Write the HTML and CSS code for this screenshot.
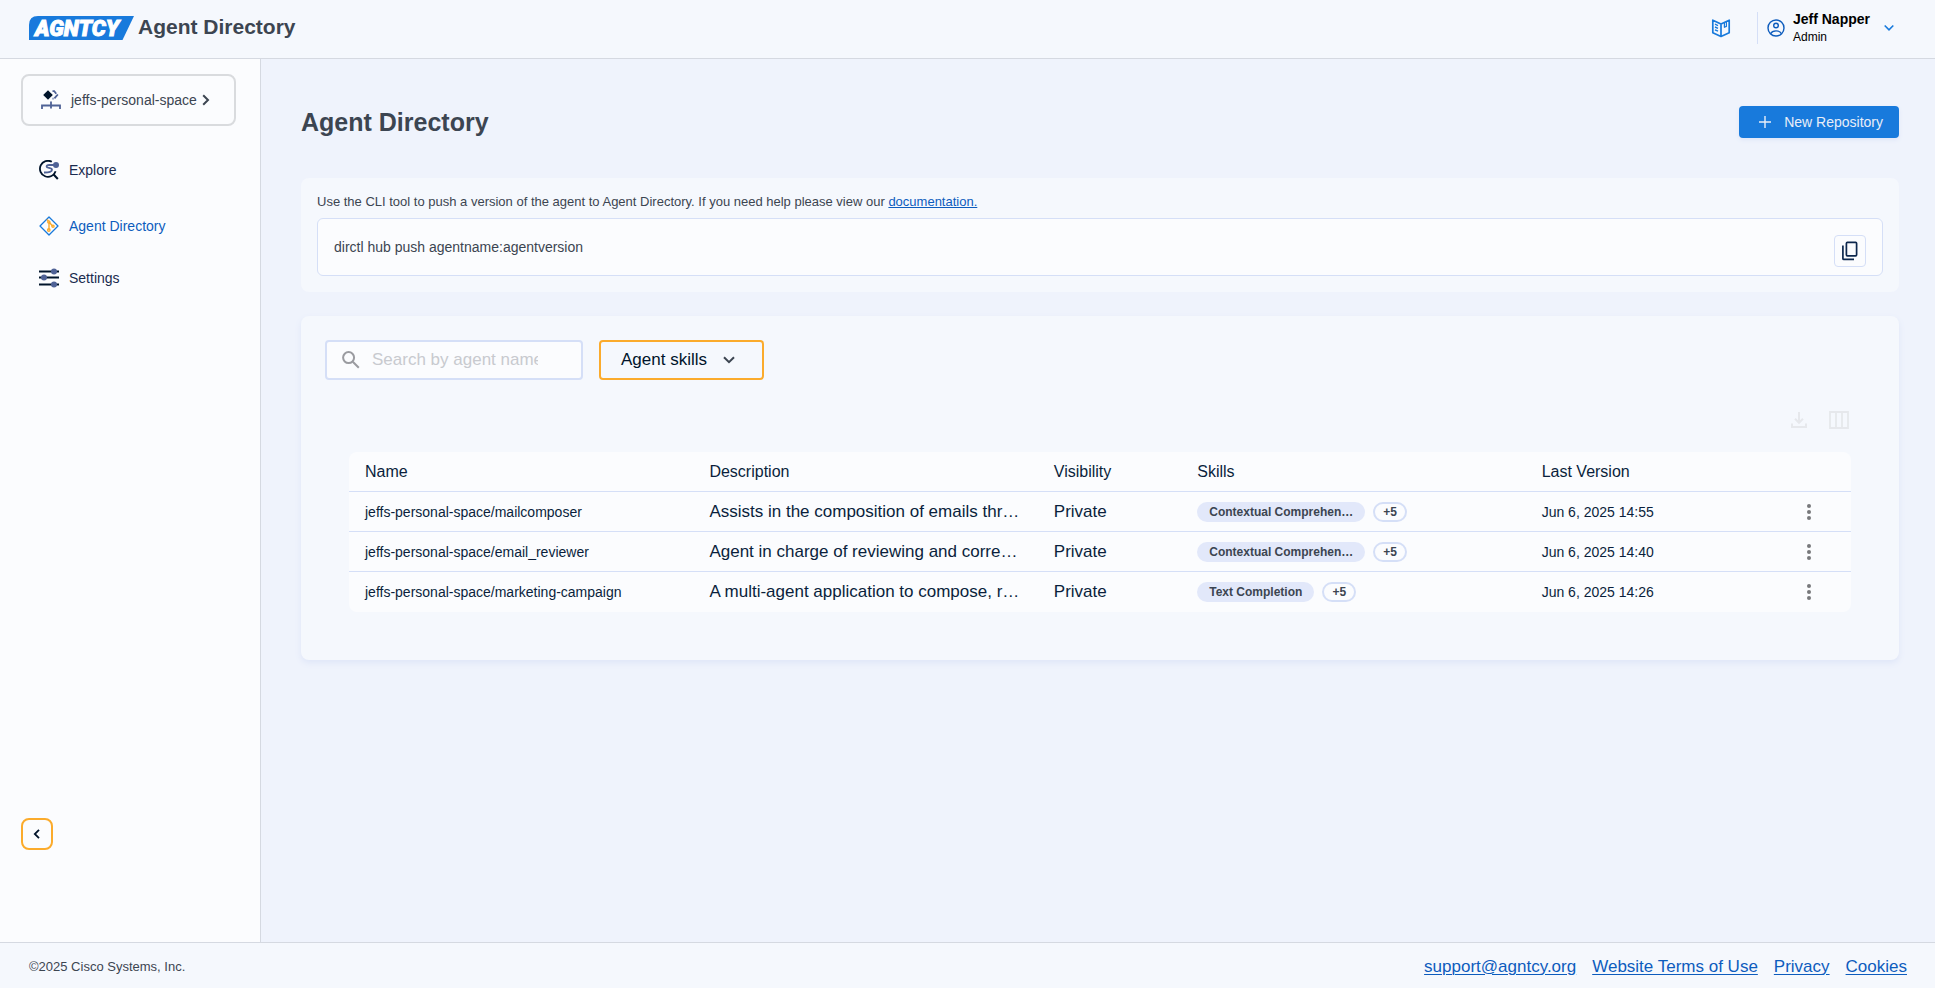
FILE: index.html
```html
<!DOCTYPE html>
<html lang="en">
<head>
<meta charset="utf-8">
<title>Agent Directory</title>
<link rel="stylesheet" href="styles.css">
</head>
<body>
<header class="topbar">
  <a class="brand" href="#">
    <svg class="brand-logo" width="105" height="24" viewBox="0 0 105 24" role="img" aria-label="AGNTCY">
      <path d="M9 0H105L93.500 24H0V9Q0 0 9 0Z" fill="#187adc"/>
      <text class="logo-text" x="6" y="20">AGNTCY</text>
    </svg>
    <span class="brand-name">Agent Directory</span>
  </a>
  <div class="topbar-right">
    <a class="docs-link" href="#" aria-label="Documentation">
      <svg width="20" height="20" viewBox="0 0 20 20" fill="none" stroke="#187adc" stroke-width="1.700" stroke-linejoin="round">
        <path d="M1.800 2.200 10 6 18.200 2.200V14.800L10 18.500 1.800 14.800ZM10 6V18.500"/>
        <path d="M4 6.200 7 7.600M4 9 7 10.400M4 11.800 7 13.200" stroke-width="1.400"/>
        <path d="M13.400 4.400V9.300L15.400 8.400V3.500" stroke-width="1.200"/>
      </svg>
    </a>
    <button class="user" type="button">
      <svg width="18" height="18" viewBox="0 0 18 18" fill="none" stroke="#0d5cbd" stroke-width="1.400">
        <circle cx="9" cy="9" r="8"/><circle cx="9" cy="6.500" r="2.300"/>
        <path d="M3.600 14.800Q5 11.900 9 11.900T14.400 14.800"/>
      </svg>
      <span class="user-text"><span class="user-name">Jeff Napper</span><span class="user-role">Admin</span></span>
      <svg class="user-chevron" width="10" height="8" viewBox="0 0 10 8" fill="none" stroke="#187adc" stroke-width="1.600"><path d="M.7 1.500 5 5.800 9.300 1.500"/></svg>
    </button>
  </div>
</header>
<div class="shell">
  <aside class="sidebar">
    <button class="space-switch" type="button">
      <svg width="20" height="20" viewBox="0 0 20 20">
        <path d="M7 .2 11.800 5 7 9.800 2.200 5Z" fill="#00142b"/>
        <path d="M11.500 1.200H13.200L16.300 5 13.200 8.600H11.500" fill="none" stroke="#4f6296" stroke-width="1.800" stroke-dasharray="5 1"/>
        <path d="M1 19V15.500H19V19M10 11.500V18.500" fill="none" stroke="#4f6296" stroke-width="1.800"/>
      </svg>
      <span class="space-name">jeffs-personal-space</span>
      <svg width="8" height="12" viewBox="0 0 8 12" fill="none" stroke="#3c4551" stroke-width="2"><path d="M1.200 1.200 6 6 1.200 10.800"/></svg>
    </button>
    <nav class="nav">
      <a class="nav-item" href="#">
        <svg width="20" height="20" viewBox="0 0 20 20" fill="none">
          <path d="M12.800 1.800A8 8 0 1 0 16.600 11.200" stroke="#00142b" stroke-width="1.800"/>
          <path d="M14.200 14 18.800 19" stroke="#00142b" stroke-width="2"/>
          <path d="M16 5H10.200Q7.600 5 7.600 6.700C7.600 8.500 13 7.400 13 9.800Q13 12.600 5 12.500" stroke="#4f6296" stroke-width="1.800"/>
          <circle cx="17" cy="5" r="3" fill="#4f6296"/>
        </svg>
        <span>Explore</span>
      </a>
      <a class="nav-item nav-item-active" href="#" aria-current="page">
        <svg width="20" height="20" viewBox="0 0 20 20" fill="none">
          <path d="M10 1 19 10 10 19 1 10Z" stroke="#187adc" stroke-width="1.300" stroke-linejoin="round"/>
          <g stroke="#fbab2c" stroke-width="1.400"><path d="M8 3.500 9.500 5M10 6V14M10.500 6.500 13.500 10"/><circle cx="9.800" cy="6" r="1.100"/><circle cx="9.800" cy="14" r="1.200"/><circle cx="14" cy="10.200" r="1.100"/></g>
        </svg>
        <span>Agent Directory</span>
      </a>
      <a class="nav-item nav-item-last" href="#">
        <svg width="20" height="20" viewBox="0 0 20 20">
          <path d="M0 3.500H20M0 9.500H20M0 16.500H20" stroke="#00142b" stroke-width="2"/>
          <g fill="#4f6296"><circle cx="15" cy="3.500" r="3"/><circle cx="5" cy="9.500" r="3"/><circle cx="15" cy="16.500" r="3"/></g>
        </svg>
        <span>Settings</span>
      </a>
    </nav>
    <button class="collapse" type="button" aria-label="Collapse sidebar">
      <svg width="8" height="10" viewBox="0 0 8 10" fill="none" stroke="#00142b" stroke-width="1.800"><path d="M6 .8 1.800 5 6 9.200"/></svg>
    </button>
  </aside>
  <main class="main">
    <div class="page-head">
      <h1 class="page-title">Agent Directory</h1>
      <button class="new-repo" type="button">
        <svg width="12" height="12" viewBox="0 0 12 12" stroke="#e8eef8" stroke-width="1.400"><path d="M6 0V12M0 6H12"/></svg>
        <span>New Repository</span>
      </button>
    </div>
    <section class="card cli-card">
      <p class="cli-help">Use the CLI tool to push a version of the agent to Agent Directory. If you need help please view our <a class="doc-link" href="#">documentation.</a></p>
      <div class="cli-box">
        <code class="cli-command">dirctl hub push agentname:agentversion</code>
        <button class="copy" type="button" aria-label="Copy command">
          <svg width="20" height="20" viewBox="0 0 20 20" fill="none" stroke="#0d274d" stroke-width="1.700">
            <rect x="6.400" y="1.400" width="10.200" height="13.400" rx="1"/><path d="M2.900 4.500V17.400Q2.900 18.400 3.900 18.400H14"/>
          </svg>
        </button>
      </div>
    </section>
    <section class="card list-card">
      <div class="filters">
        <label class="search">
          <svg width="18" height="18" viewBox="0 0 18 18" fill="none" stroke="#9a9ba0" stroke-width="2"><circle cx="6.600" cy="6.600" r="5.500"/><path d="M10.800 10.800 16.800 16.800"/></svg>
          <input class="search-input" type="text" placeholder="Search by agent name" aria-label="Search by agent name">
        </label>
        <button class="skills-filter" type="button" aria-haspopup="listbox">
          <span>Agent skills</span>
          <svg width="12" height="8" viewBox="0 0 12 8" fill="none" stroke="#3c4551" stroke-width="2"><path d="M1 1.200 6 6.200 11 1.200"/></svg>
        </button>
      </div>
      <div class="table-tools">
        <button class="tool" type="button" aria-label="Export" disabled>
          <svg width="16" height="16" viewBox="0 0 16 16" fill="none" stroke="#e6e8ec" stroke-width="2"><path d="M8 0V10.500M4 6.800 8 10.800 12 6.800M1 11.500V15H15V11.500"/></svg>
        </button>
        <button class="tool" type="button" aria-label="Columns" disabled>
          <svg width="20" height="18" viewBox="0 0 20 18" fill="none" stroke="#e6e8ec" stroke-width="1.800"><path d="M1 1H19V17H1ZM7 1V17M13 1V17"/></svg>
        </button>
      </div>
      <table class="agents">
        <colgroup><col class="col-wide"><col class="col-wide"><col class="col-narrow"><col class="col-wide"><col class="col-date"><col></colgroup>
        <thead>
          <tr><th>Name</th><th>Description</th><th>Visibility</th><th>Skills</th><th>Last Version</th><th aria-label="Actions"></th></tr>
        </thead>
        <tbody>
          <tr>
            <td class="small">jeffs-personal-space/mailcomposer</td><td>Assists in the composition of emails thr…</td><td>Private</td>
            <td><div class="chips"><span class="chip">Contextual Comprehen…</span><span class="chip-more">+5</span></div></td>
            <td class="small">Jun 6, 2025 14:55</td>
            <td class="actions"><button class="dots" type="button" aria-label="Row actions"><svg width="4" height="16" viewBox="0 0 4 16" fill="#77787b"><circle cx="2" cy="2" r="2"/><circle cx="2" cy="8" r="2"/><circle cx="2" cy="14" r="2"/></svg></button></td>
          </tr>
          <tr>
            <td class="small">jeffs-personal-space/email_reviewer</td><td>Agent in charge of reviewing and corre…</td><td>Private</td>
            <td><div class="chips"><span class="chip">Contextual Comprehen…</span><span class="chip-more">+5</span></div></td>
            <td class="small">Jun 6, 2025 14:40</td>
            <td class="actions"><button class="dots" type="button" aria-label="Row actions"><svg width="4" height="16" viewBox="0 0 4 16" fill="#77787b"><circle cx="2" cy="2" r="2"/><circle cx="2" cy="8" r="2"/><circle cx="2" cy="14" r="2"/></svg></button></td>
          </tr>
          <tr>
            <td class="small">jeffs-personal-space/marketing-campaign</td><td>A multi-agent application to compose, r…</td><td>Private</td>
            <td><div class="chips"><span class="chip">Text Completion</span><span class="chip-more">+5</span></div></td>
            <td class="small">Jun 6, 2025 14:26</td>
            <td class="actions"><button class="dots" type="button" aria-label="Row actions"><svg width="4" height="16" viewBox="0 0 4 16" fill="#77787b"><circle cx="2" cy="2" r="2"/><circle cx="2" cy="8" r="2"/><circle cx="2" cy="14" r="2"/></svg></button></td>
          </tr>
        </tbody>
      </table>
    </section>
  </main>
</div>
<footer class="footer">
  <span class="copyright">©2025 Cisco Systems, Inc.</span>
  <nav class="footer-links">
    <a href="#">support@agntcy.org</a>
    <a href="#">Website Terms of Use</a>
    <a href="#">Privacy</a>
    <a href="#">Cookies</a>
  </nav>
</footer>
</body>
</html>
```
FILE: styles.css
```css
* { box-sizing: border-box; }
body {
  margin: 0;
  min-height: 100vh;
  display: flex;
  flex-direction: column;
  background: #eff3fc;
  color: #3c4551;
  font: 14px/20px "Liberation Sans", Arial, sans-serif;
}
button { font: inherit; color: inherit; margin: 0; padding: 0; background: none; border: 0; cursor: pointer; }
svg { display: block; flex: none; }

.topbar {
  display: flex;
  align-items: center;
  justify-content: space-between;
  height: 59px;
  padding: 0 41px 2px 29px;
  background: #f5f8fd;
  border-bottom: 1px solid #d5d9e1;
}
.brand { display: flex; align-items: center; gap: 4px; color: inherit; text-decoration: none; }
.brand-logo { overflow: visible; }
.logo-text { font: italic 900 22px Roboto, sans-serif; fill: #fff; stroke: #fff; stroke-width: 1; }
.brand-name { padding-bottom: 2px; font-size: 21px; line-height: 24px; font-weight: 700; }
.topbar-right { display: flex; align-items: center; }
.docs-link { padding-right: 26px; }
.user { display: flex; align-items: center; height: 32px; padding-left: 9px; border-left: 1px solid #d5dff7; color: #000; text-align: left; }
.user-text { display: flex; flex-direction: column; margin-left: 8px; }
.user-name { font-weight: 700; line-height: 18px; }
.user-role { font-size: 12px; line-height: 18px; }
.user-chevron { margin-left: 14px; }

.shell { display: flex; flex: 1; }
.sidebar {
  display: flex;
  flex-direction: column;
  flex: none;
  width: 261px;
  padding: 15px 24px 92px 21px;
  background: #fbfcfe;
  border-right: 1px solid #d5d9e1;
}
.space-switch { display: flex; align-items: center; height: 52px; padding-left: 18px; border: 2px solid #d9dbde; border-radius: 8px; }
.space-name { margin-left: 10px; margin-right: 5px; }
.nav { display: flex; flex-direction: column; padding: 16px 18px; }
.nav-item { display: flex; align-items: center; gap: 10px; height: 56px; color: #1a2b4f; text-decoration: none; }
.nav-item-active { color: #0d5cbd; }
.nav-item-last { height: 48px; }
.collapse { display: flex; align-items: center; justify-content: center; width: 32px; height: 32px; margin-top: auto; border: 2px solid #fbab2c; border-radius: 8px; }

.main { flex: 1; min-width: 0; padding: 47px 36px 48px 40px; }
.page-head { display: flex; align-items: center; justify-content: space-between; margin-bottom: 40px; }
.page-title { margin: 0; font-size: 25px; line-height: 32px; font-weight: 700; }
.new-repo {
  display: flex;
  align-items: center;
  gap: 13px;
  height: 32px;
  padding: 0 16px 0 20px;
  border-radius: 4px;
  background: #187adc;
  color: #e8eef8;
  box-shadow: 0 2px 4px #dfe6f8;
}
.card { background: #f5f8fd; border-radius: 8px; }
.cli-card { padding: 16px; margin-bottom: 24px; }
.cli-help { margin: 0 0 8px; font-size: 13px; line-height: 16px; }
.doc-link { color: #0d5cbd; }
.cli-box { display: flex; align-items: center; justify-content: space-between; height: 58px; padding: 0 16px; background: #fbfcfe; border: 1px solid #d5dff7; border-radius: 6px; }
.cli-command { font: 14px/20px "Liberation Sans", Arial, sans-serif; }
.copy { display: flex; align-items: center; justify-content: center; width: 32px; height: 32px; margin-top: 8px; border: 1px solid #d5dff7; border-radius: 4px; }

.list-card { padding: 24px 48px 48px; box-shadow: 0 3px 6px #dfe6f8; }
.filters { display: flex; gap: 16px; margin-left: -24px; }
.search { display: flex; align-items: center; gap: 12px; width: 258px; height: 40px; padding: 0 15px; background: #fbfcfe; border: 2px solid #d5dff7; border-radius: 4px; }
.search-input { width: 166px; padding: 0; border: 0; outline: 0; background: none; font: 17px/24px "Liberation Sans", Arial, sans-serif; color: #3c4551; }
.search-input::placeholder { color: #c8cacf; opacity: 1; }
.skills-filter { display: flex; align-items: center; justify-content: space-between; width: 165px; padding: 0 27px 0 20px; border: 2px solid #fbab2c; border-radius: 4px; font-size: 17px; color: #00142b; }
.table-tools { display: flex; justify-content: flex-end; padding: 20px 0 12px; margin-right: -8px; }
.tool { display: flex; align-items: center; justify-content: center; width: 40px; height: 40px; }

.agents { width: 100%; table-layout: fixed; border-spacing: 0; background: #fbfcfe; border-radius: 8px; color: #0a1f3c; }
.col-wide { width: 22.93%; }
.col-narrow { width: 9.55%; }
.col-date { width: 16.2%; }
.agents th, .agents td { height: 40px; padding: 0 0 0 16px; text-align: left; white-space: nowrap; border-bottom: 1px solid #d5dff7; }
.agents th { font-size: 16px; font-weight: 400; }
.agents td { font-size: 17px; }
.agents tbody tr:last-child td { border-bottom: 0; }
.agents td.small { font-size: 14px; }
.chips { display: flex; gap: 8px; font-size: 12px; line-height: 16px; font-weight: 700; color: #3c4551; }
.chip { padding: 2px 12px; border-radius: 10px; background: #e2e8fa; }
.chip-more { padding: 0 8px; border: 2px solid #d5dff7; border-radius: 10px; }
.agents td.actions { padding-left: 28px; }
.dots { display: flex; justify-content: center; width: 24px; }

.footer { display: flex; align-items: center; justify-content: space-between; height: 46px; padding: 2px 28px 0 29px; background: #f5f8fd; border-top: 1px solid #d5d9e1; }
.copyright { font-size: 13px; }
.footer-links { display: flex; gap: 16px; font-size: 17px; }
.footer-links a { color: #0d5cbd; text-decoration-thickness: 1px; text-underline-offset: 2px; }
```
